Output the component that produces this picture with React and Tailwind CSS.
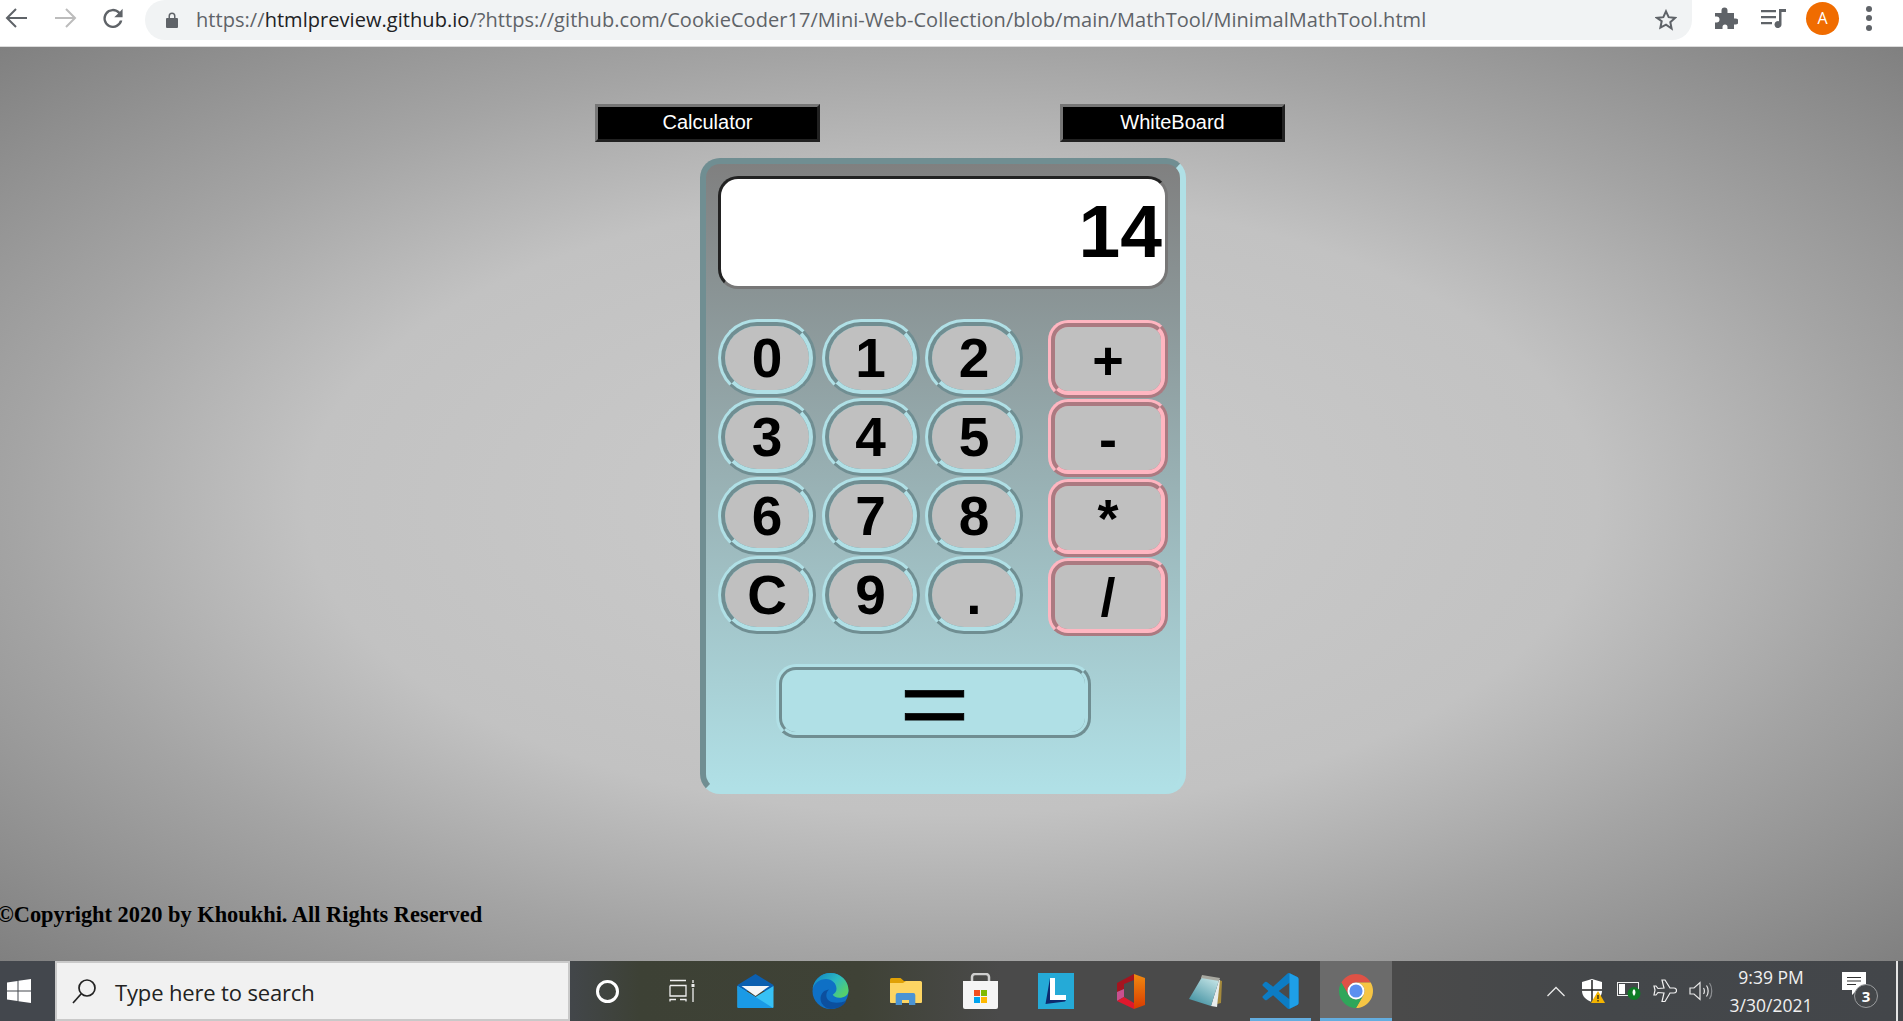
import React from 'react'

const numKeys = ['0', '1', '2', '3', '4', '5', '6', '7', '8', 'C', '9', '.']
const opKeys = ['+', '-', '*', '/']
const slots = ['mail', 'edge', 'folder', 'store', 'lingo', 'office', 'note', 'code', 'chrome']

function Back({ color }) {
  return (
    <svg width="22" height="20" viewBox="0 0 22 20" fill="none" stroke={color} strokeWidth="2">
      <path d="M22 10H2M11 1l-9 9 9 9" />
    </svg>
  )
}

function Reload() {
  return (
    <svg width="22" height="20" viewBox="0 0 24 24" fill="#5f6368">
      <path d="M20.3 4.6 A11.5 11.5 0 1 0 23.2 15h-3 A8.6 8.6 0 1 1 18.2 6.7L13.5 11H23.5V1z" />
    </svg>
  )
}

function ChromeBar() {
  return (
    <div className="h-[47px] shrink-0 bg-white border-b border-[#dcdcdc] flex items-start">
      <div className="w-[145px] h-[36px] flex items-center pl-[5px] gap-[28px]">
        <Back color="#5f6368" />
        <div className="rotate-180 flex"><Back color="#bcbcbc" /></div>
        <div className="-ml-[3px] flex"><Reload /></div>
      </div>
      <div className="w-[1547px] h-[40px] rounded-b-[20px] rounded-l-[20px] rounded-t-none bg-[#f1f3f4] flex items-center pl-[21px] pr-[15px]">
        <svg width="12" height="16" viewBox="0 0 12 16" fill="#5f6368">
          <path d="M1 6h1.500V4a3.500 3.500 0 0 1 7 0v2H11a1 1 0 0 1 1 1v8a1 1 0 0 1-1 1H1a1 1 0 0 1-1-1V7a1 1 0 0 1 1-1zM4 6h4V4a2 2 0 0 0-4 0z" />
        </svg>
        <div className="ml-[18px] flex-1 text-[20px] text-[#5f6368] font-['Open_Sans',sans-serif] tracking-[0.05px] whitespace-nowrap">
          https://<span className="text-[#202124]">htmlpreview.github.io</span>/?https://github.com/CookieCoder17/Mini-Web-Collection/blob/main/MathTool/MinimalMathTool.html
        </div>
        <svg width="22" height="22" viewBox="0 0 24 24" fill="none" stroke="#5f6368" strokeWidth="2.200">
          <path d="M12 2.500l2.900 6.400 7 .8-5.200 4.700 1.400 6.900L12 17l-6.100 3.300 1.400-6.900L2.100 9.700l7-.8z" />
        </svg>
      </div>
      <div className="flex-1 h-[36px] flex items-center pl-[23px]">
        <svg width="23" height="22" viewBox="0 0 23 22" fill="#5f6368">
          <path d="M0 6h6.500V3.500a3 3 0 0 1 6 0V6H19v5.500h1.500a3 3 0 0 1 0 6H19V22h-6.500v-2a2.500 2.500 0 0 0-5 0v2H0v-6.500h1.500a3 3 0 0 0 0-6H0z" />
        </svg>
        <svg className="ml-[23px]" width="25" height="19" viewBox="0 0 25 19" fill="#5f6368">
          <path d="M0 1h15v2.200H0zM0 7h15v2.200H0zM0 13h11v2.200H0zM18 0h7v3h-4.500v12.500a3.500 3.500 0 1 1-2.500-3.300z" />
        </svg>
        <div className="ml-[20px] w-[33px] h-[33px] rounded-full bg-[#f06c00] text-white text-[16px] flex items-center justify-center font-['Open_Sans',sans-serif]">A</div>
        <div className="ml-[27px] flex flex-col gap-[3.500px]">
          <div className="w-[6px] h-[6px] rounded-full bg-[#5f6368]"></div>
          <div className="w-[6px] h-[6px] rounded-full bg-[#5f6368]"></div>
          <div className="w-[6px] h-[6px] rounded-full bg-[#5f6368]"></div>
        </div>
      </div>
    </div>
  )
}

function TopTabs() {
  return (
    <div className="flex pl-[595px] pt-[57px] gap-[240px]">
      <button className="w-[225px] h-[38px] pb-[2px] bg-black text-white text-[20px] border-[3px] [border-style:outset] border-[#767676]">Calculator</button>
      <button className="w-[225px] h-[38px] pb-[2px] bg-black text-white text-[20px] border-[3px] [border-style:outset] border-[#767676]">WhiteBoard</button>
    </div>
  )
}

function Calculator() {
  return (
    <div className="ml-[700px] mt-[16px] w-[486px] h-[636px] rounded-[20px] border-[6px] [border-style:inset] border-[#b0e0e6] bg-[linear-gradient(#808080,#b0e0e6)] px-[12px] pt-[12px]">
      <div className="h-[113px] rounded-[20px] border-[3px] [border-style:inset] border-[#777777] bg-white flex items-center justify-end pr-[3px] text-[75px] font-bold text-black pb-[2px]">14</div>
      <div className="mt-[30px] flex justify-between">
        <div className="grid grid-cols-[98px_98px_98px] gap-x-[5.500px] auto-rows-[78px] gap-y-[1px]">
          {numKeys.map((k) => (
            <button key={k} className="rounded-[40px] border-[7px] [border-style:ridge] border-[#b0e0e6] bg-[#c0c0c0] text-[55px] font-bold text-black flex items-center justify-center leading-none">{k}</button>
          ))}
        </div>
        <div className="grid grid-cols-[120px] auto-rows-[78px] gap-y-[1.300px] mt-[1px]">
          {opKeys.map((k) => (
            <button key={k} className="rounded-[20px] border-[7px] [border-style:ridge] border-[#ffb6c1] bg-[#c0c0c0] text-[54px] font-bold text-black flex items-center justify-center leading-none pt-[1px]">{k}</button>
          ))}
        </div>
      </div>
      <button className="flex items-center justify-center mt-[28px] ml-[58px] w-[315px] h-[74px] rounded-[20px] border-[6px] [border-style:ridge] border-[#b0e0e6] bg-[#b0e0e6] text-[120px] text-black leading-none">
        <span className="block scale-y-[0.75] relative top-[2px] left-[1px] [-webkit-text-stroke:1px_black]">=</span>
      </button>
    </div>
  )
}

function Mail() {
  return (
    <svg width="37" height="34" viewBox="0 0 36 34">
      <path d="M0 11 18 0 36 11v6H0z" fill="#0b5fb0" />
      <path d="M4 12H32L18 22z" fill="#f4f6f8" />
      <path d="M0 12 18 23 36 12V33a1 1 0 0 1-1 1H1a1 1 0 0 1-1-1z" fill="#37c1f5" />
      <path d="M0 12 18 23 35.500 34H1a1 1 0 0 1-1-1z" fill="#1a9ae6" />
    </svg>
  )
}

function Edge() {
  return (
    <svg width="37" height="36" viewBox="0 0 24 24">
      <defs>
        <linearGradient id="edgeTop" x1="0" y1="0" x2="1" y2="0.6">
          <stop offset="0" stopColor="#0c7fc8" />
          <stop offset="0.6" stopColor="#2cb8c0" />
          <stop offset="1" stopColor="#54cf6e" />
        </linearGradient>
      </defs>
      <circle cx="12" cy="12" r="12" fill="#0f70c5" />
      <path d="M12 24C18 24 21 21.500 22.500 18.500 19 20 14 20.500 11 18.500 8.500 16.500 8.800 13 11 11 7 11.500 4 15 6 20 7.500 22.500 10 24 12 24z" fill="#0c4f9e" />
      <path d="M12 0C18.500 0 24 5 24 11.500 24 15 21 16.500 18 16.500 15.500 16.500 14 15.500 13.500 14.500 15 13.500 16 12.500 16 10.500 16 7 13 4 9 4 4.500 4 1 7 0 11 .5 5 5.500 0 12 0z" fill="url(#edgeTop)" />
    </svg>
  )
}

function Folder() {
  return (
    <svg width="32" height="27" viewBox="0 0 32 27">
      <path d="M0 1.500A1.500 1.500 0 0 1 1.500 0h9L14 3h15v4H0z" fill="#e0a106" />
      <path d="M0 5h13l3-2h14.500A1.500 1.500 0 0 1 32 4.500V24a1 1 0 0 1-1 1H1a1 1 0 0 1-1-1z" fill="#fdd563" />
      <path d="M5.700 27V17a2 2 0 0 1 2-2h15.600a2 2 0 0 1 2 2v10h-6.300v-5h-7v5z" fill="#4b94d4" />
    </svg>
  )
}

function Store() {
  return (
    <svg width="35" height="36" viewBox="0 0 35 36">
      <path d="M9 10V4a3 3 0 0 1 3-3h11a3 3 0 0 1 3 3v6" fill="none" stroke="#cfcfcf" strokeWidth="2.500" />
      <path d="M0 8h35v26a2 2 0 0 1-2 2H2a2 2 0 0 1-2-2z" fill="#f5f5f5" />
      <rect x="11" y="17" width="6" height="6" fill="#f25022" />
      <rect x="18" y="17" width="6" height="6" fill="#7fba00" />
      <rect x="11" y="24" width="6" height="6" fill="#00a4ef" />
      <rect x="18" y="24" width="6" height="6" fill="#ffb900" />
    </svg>
  )
}

function Lingo() {
  return (
    <svg width="36" height="36" viewBox="0 0 36 36">
      <rect width="36" height="36" fill="#25aad7" />
      <path d="M7.500 31 12 5h2v22h14l-1 1.500z" fill="#0d2a6e" />
      <path d="M12 5h5v17h11v5H12z" fill="#fff" />
    </svg>
  )
}

function Office() {
  return (
    <svg width="28" height="35" viewBox="0 0 28 35">
      <defs>
        <linearGradient id="officeBand" x1="0" y1="0" x2="0" y2="1">
          <stop offset="0" stopColor="#f08a10" />
          <stop offset="1" stopColor="#d83b01" />
        </linearGradient>
      </defs>
      <path d="M17 0 28 4V31L17 35z" fill="url(#officeBand)" />
      <path d="M17 0 0 9V18L7 15V10L17 6z" fill="#a5141f" />
      <path d="M0 18 7 15V23L0 27z" fill="#c8508f" />
      <path d="M0 27 7 23 17 29V35z" fill="#e0182d" />
    </svg>
  )
}

function Note() {
  return (
    <svg width="33" height="32" viewBox="0 0 33 32">
      <defs>
        <linearGradient id="noteCover" x1="0.8" y1="0" x2="0.2" y2="1">
          <stop offset="0" stopColor="#c4e4e6" />
          <stop offset="1" stopColor="#3f8fa0" />
        </linearGradient>
      </defs>
      <path d="M30 5 33 6 32 28 28 29z" fill="#a58a3c" />
      <path d="M30 5 31 5 28 32 22 31z" fill="#e8ecec" />
      <path d="M13 2 30 5 22 31 0 24z" fill="url(#noteCover)" />
      <path d="M13 0 31 3 30 6 12 3z" fill="#a8a8a0" />
    </svg>
  )
}

function Code() {
  return (
    <svg width="37" height="36" viewBox="0 0 24 24">
      <path d="M23.150 2.587L18.210.210a1.494 1.494 0 0 0-1.705.290l-9.460 8.630-4.120-3.128a.999.999 0 0 0-1.276.057L.327 7.261A1 1 0 0 0 .326 8.740L3.899 12 .326 15.260a1 1 0 0 0 .001 1.479L1.650 17.940a.999.999 0 0 0 1.276.057l4.120-3.128 9.460 8.630a1.492 1.492 0 0 0 1.704.290l4.942-2.377A1.500 1.500 0 0 0 24 20.060V3.939a1.500 1.500 0 0 0-.850-1.352zm-5.146 14.861L10.826 12l7.178-5.448v10.896z" fill="#0c7cc4" />
      <path d="M18 .1l5.150 2.487A1.500 1.500 0 0 1 24 3.939V20.060a1.500 1.500 0 0 1-.850 1.353L18 23.900z" fill="#1e9fe8" />
    </svg>
  )
}

function ChromeLogo() {
  return (
    <svg width="34" height="34" viewBox="-22 -22 44 44">
      <path d="M0-11H19.050A22 22 0 0 0-19.050-11L-9.526 5.500A11 11 0 0 1 0-11z" fill="#de5246" />
      <path d="M9.526 5.500 0 22A22 22 0 0 0 19.050-11H0A11 11 0 0 1 9.526 5.500z" fill="#f6c544" />
      <path d="M-9.526 5.500-19.050-11A22 22 0 0 0 0 22L9.526 5.500A11 11 0 0 1-9.526 5.500z" fill="#2fa65a" />
      <circle r="11" fill="#fff" />
      <circle r="8.500" fill="#5b8ff0" />
    </svg>
  )
}

const icons = { mail: Mail, edge: Edge, folder: Folder, store: Store, lingo: Lingo, office: Office, note: Note, code: Code, chrome: ChromeLogo }

function Taskbar() {
  return (
    <div className="h-[60px] shrink-0 flex items-stretch text-white bg-[linear-gradient(90deg,#43474d_0,#43474d_560px,#3d4135_640px,#3f4236_860px,#4a4a4a_1000px,#4a4a4a_1400px,#44474a_1600px,#43464a_100%)]">
      <div className="w-[55px] flex items-center pl-[7px]">
        <svg width="24" height="24" viewBox="0 0 24 24" fill="#fff">
          <path d="M0 3.500 10.500 2v9.500H0zM11.500 1.800 24 0v11.500H11.500zM0 12.500h10.500V22L0 20.500zM11.500 12.500H24V24L11.500 22.200z" />
        </svg>
      </div>
      <div className="w-[515px] bg-[#f1f1f1] border-2 border-[#c9c9c9] flex items-center pl-[15px] font-['Open_Sans',sans-serif] text-[22px] text-[#222]">
        <svg width="24" height="25" viewBox="0 0 24 25" fill="none" stroke="#222" strokeWidth="1.700">
          <circle cx="15" cy="9" r="8" />
          <path d="M9 15 1 24" />
        </svg>
        <span className="ml-[19px] pt-[3px] tracking-[-0.15px]">Type here to search</span>
      </div>
      <div className="w-[75px] flex items-center justify-center">
        <div className="w-[23px] h-[23px] rounded-full border-[3px] border-white"></div>
      </div>
      <div className="w-[73px] flex items-center justify-center">
        <svg width="26" height="24" viewBox="0 0 26 24" fill="none" stroke="#f0f0f0" strokeWidth="1.300">
          <path d="M1 1.500H17M1 6.500H17V17H1V6.500M1 22.500V20.500H7M11 20.500H17V22.500M24 1V4M24 9V23" />
          <rect x="22.500" y="5" width="3" height="3" fill="#f0f0f0" stroke="none" />
        </svg>
      </div>
      {slots.map((s) => {
        const Icon = icons[s]
        return (
          <div key={s} className={s === 'chrome' ? 'w-[72px] flex items-center justify-center border-b-[3px] border-[#63addf] bg-[#6b6b6b] pt-[3px]' : s === 'code' ? 'w-[61px] ml-[7px] mr-[9px] flex items-center justify-center border-b-[3px] border-[#63addf] pt-[3px]' : 'w-[75px] flex items-center justify-center'}>
            <Icon />
          </div>
        )
      })}
      <div className="flex-1 flex items-center justify-end">
        <svg width="18" height="11" viewBox="0 0 18 11" fill="none" stroke="#e8e8e8" strokeWidth="1.300"><path d="M0.500 10 9 1.500 17.500 10" /></svg>
        <svg className="ml-[17px]" width="23" height="24" viewBox="0 0 23 24">
          <path d="M10 0l10 3v9c0 5-4 9-10 11C4 21 0 17 0 12V3z" fill="#fff" />
          <path d="M10 1v22M0 11h20" stroke="#222" strokeWidth="1.500" />
          <path d="M16 12l7 12H9z" fill="#f4b400" />
          <path d="M16 16v4M16 21v1.500" stroke="#222" strokeWidth="1.300" />
        </svg>
        <svg className="ml-[12px]" width="24" height="18" viewBox="0 0 24 18">
          <rect x="0.500" y="0.500" width="21" height="13" fill="none" stroke="#eee" />
          <rect x="2" y="2" width="6" height="10" fill="#fff" />
          <circle cx="17" cy="11.500" r="6.500" fill="#0f7b25" />
          <path d="M17 7c2 1.500 2 5 0 7-2-2-2-5.500 0-7z" fill="#fff" />
        </svg>
        <svg className="ml-[12px]" width="24" height="24" viewBox="0 0 24 24" fill="none" stroke="#f0f0f0" strokeWidth="1.200">
          <path d="M9 1h3l5 8h4a2.500 2.500 0 0 1 0 5h-4l-5 8.500H9l2-8.500-6-.5-2 2.500H1l1-5-1-4h2l2 2.500 6-.5z" />
        </svg>
        <svg className="ml-[12px]" width="24" height="20" viewBox="0 0 24 20" fill="none" stroke="#e8e8e8" strokeWidth="1.200">
          <path d="M1 7h4l6-5.500v17L5 13H1z" />
          <path d="M14.500 7c1.200 1.500 1.200 4.500 0 6" />
          <path d="M17.500 4.500c2.200 3 2.200 8 0 11" />
          <path d="M20.500 2c3 4 3 12 0 16" stroke="#8d8f92" />
        </svg>
        <div className="ml-[16px] w-[84px] flex flex-col items-center font-['Open_Sans',sans-serif] text-[17.500px] leading-[28px] text-[#f0f0f0]">
          <span>9:39 PM</span>
          <span>3/30/2021</span>
        </div>
        <div className="relative ml-[29px] mr-[18px] w-[36px] h-[36px]">
          <svg width="24" height="24" viewBox="0 0 24 24" className="mt-[-1px]">
            <path d="M0 0h24v18H15l-5 5v-5H0z" fill="#fff" />
            <path d="M5 5.500h14M5 9h14M5 12.500h9" stroke="#333" strokeWidth="1" />
          </svg>
          <div className="absolute left-[12px] top-[11px] w-[24px] h-[24px] rounded-full border border-[#9a9c9e] bg-[#44474a] text-[15px] font-bold flex items-center justify-center font-['Open_Sans',sans-serif]">3</div>
        </div>
        <div className="w-[2px] h-full bg-[#e5e5e5] mr-[5px]"></div>
      </div>
    </div>
  )
}

export default function App() {
  return (
    <div className="h-screen w-full overflow-hidden flex flex-col font-['Liberation_Sans',Arial,sans-serif]">
      <ChromeBar />
      <div className="flex-1 relative bg-[radial-gradient(#cccccc_0%,#c2c2c2_48%,#a4a4a4_70%,#808080_100%)]">
        <TopTabs />
        <Calculator />
        <p className="absolute left-[-3px] bottom-[29px] text-[22.400px] font-bold text-black font-['Liberation_Serif',serif] whitespace-nowrap">©Copyright 2020 by Khoukhi. All Rights Reserved</p>
      </div>
      <Taskbar />
    </div>
  )
}
